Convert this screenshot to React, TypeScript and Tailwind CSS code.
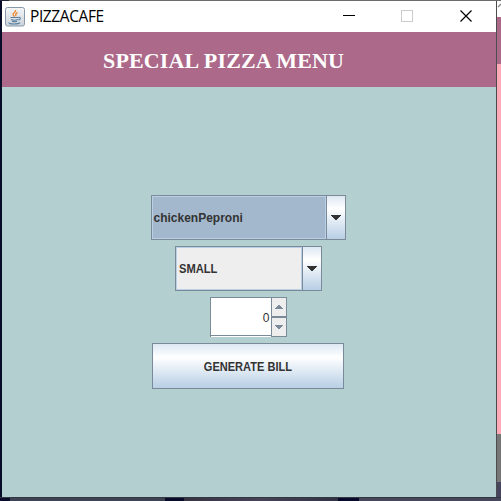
import React from "react";

function Combo({ label, className, fill, text }: { label: string; className: string; fill: string; text: string }) {
  return (
    <div className={`flex h-[45px] border border-[#7a8a99] ${className}`}>
      <div className={`flex flex-1 items-center border border-[#b8cfe5] ${fill}`}>
        <span className={`whitespace-nowrap text-[12px] font-bold leading-none text-[#333333] ${text}`}>{label}</span>
      </div>
      <div className="flex w-[19px] items-center justify-center border-l border-[#7a8a99] bg-[linear-gradient(#dde8f3_0%,#ffffff_30%,#b8cfe5_100%)]">
        <svg width="10" height="5" viewBox="0 0 10 5" shapeRendering="crispEdges">
          <path d="M0 0h10v1H9v1H8v1H7v1H6v1H4V4H3V3H2V2H1V1H0z" fill="#333333" />
        </svg>
      </div>
    </div>
  );
}

function TitleBar() {
  return (
    <header className="flex h-[31px] items-center bg-white pl-[3px]">
      <svg width="20" height="20" viewBox="0 0 20 20" className="shrink-0">
        <defs>
          <linearGradient id="tile" x1="0" y1="0" x2="0" y2="1">
            <stop offset="0" stopColor="#f5f6f7" />
            <stop offset="1" stopColor="#cbd2da" />
          </linearGradient>
        </defs>
        <rect x=".5" y=".5" width="19" height="18.500" rx="2" fill="url(#tile)" stroke="#8798aa" />
        <path d="M10.500 3c1 2-3.500 3.200-2.300 5.200.5.9 1.200 1 1 1.500M12.500 5.500c-3 1.400-1.500 2.300-1.700 3.700" fill="none" stroke="#ed8b35" strokeWidth="1.400" />
        <path d="M5.500 10.500h7.500M6 12.500c2 .8 5 .8 7 0M7 14.300c2 .7 3.500.7 5 0M13 10.500c3-1 3 2 .3 2.500M4 15.500c-1 2 9.500 2 11 .2" fill="none" stroke="#587f9f" strokeWidth="1.100" />
      </svg>
      <span className="ml-[5px] w-[80px] whitespace-nowrap font-['Open_Sans',sans-serif] text-[15.5px] leading-none tracking-[-0.4px] text-black">PIZZACAFE</span>
      <div className="mb-[1px] ml-auto mr-[24px] flex items-center">
        <svg width="12" height="12" shapeRendering="crispEdges"><path d="M0 5.500h12" stroke="#000" /></svg>
        <svg className="ml-[46px]" width="12" height="12" shapeRendering="crispEdges"><path d="M.5.5h11v11H.5z" fill="none" stroke="#cccccc" /></svg>
        <svg className="ml-[47px]" width="12" height="12"><path d="M.5.5l11 11M11.500.5l-11 11" stroke="#000" strokeWidth="1.200" /></svg>
      </div>
    </header>
  );
}

function Spinner() {
  return (
    <div className="mt-[6px] flex h-10 w-[77px]">
      <div className="flex flex-1 items-center justify-end border-l border-t border-[#7a8a99] bg-white pr-px shadow-[inset_0_-1px_#fff,inset_0_-2px_#7a8a99]">
        <span className="text-[12px] leading-none text-[#333333]">0</span>
      </div>
      <div className="w-4">
        <div className="flex h-5 items-center justify-center border border-[#7a8a99] bg-[#eeeeee]">
          <svg width="8" height="4" shapeRendering="crispEdges"><path d="M3 0h2v1h1v1h1v1h1v1H0V3h1V2h1V1h1z" fill="#7a8a99" /></svg>
        </div>
        <div className="flex h-5 items-center justify-center border border-[#7a8a99] bg-[#eeeeee]">
          <svg width="8" height="4" shapeRendering="crispEdges"><path d="M0 0h8v1H7v1H6v1H5v1H3V3H2V2H1V1H0z" fill="#7a8a99" /></svg>
        </div>
      </div>
    </div>
  );
}

export default function App() {
  return (
    <div className="flex h-[501px] w-[501px] flex-col overflow-hidden bg-[#080c28] font-['Liberation_Sans',Arial,sans-serif]">
      <div className="flex h-px"><div className="w-[9px] bg-[#20223a]" /><div className="flex-1 bg-[#6c6c6e]" /></div>
      <div className="flex h-[496px]">
        <div className="w-0.5 bg-[#080c28]" />
        <main className="flex w-[494px] flex-col bg-[#b4cfd0]">
          <TitleBar />
          <div className="flex h-[55px] items-center bg-[#ad6989] pl-[101px]">
            <h1 className="whitespace-nowrap pt-0.5 font-['Liberation_Serif',serif] text-[22px] font-bold leading-none tracking-[0.15px] text-white">SPECIAL PIZZA MENU</h1>
          </div>
          <div className="flex flex-col items-center pr-[2px] pt-[108px]">
            <Combo label="chickenPeproni" className="w-[195px]" fill="bg-[#a3b8cc] pl-px" text="tracking-normal" />
            <Combo label="SMALL" className="mt-[6px] w-[147px]" fill="bg-[#eeeeee] pl-0.5" text="origin-left scale-x-[0.93]" />
            <Spinner />
            <button className="mt-[6px] flex h-[46px] w-[192px] items-center justify-center border border-[#7a8a99] bg-[linear-gradient(#dde8f3_0%,#ffffff_30%,#b8cfe5_100%)] pt-0.5 text-[12px] font-bold leading-none text-[#333333]">
              <span className="scale-x-[0.92] whitespace-nowrap">GENERATE BILL</span>
            </button>
          </div>
        </main>
        <div className="w-px bg-[#4c4c50]" />
        <aside className="flex flex-1 flex-col">
          <div className="flex h-4 items-start bg-white"><svg width="4" height="8"><path d="M1 6l3-3" stroke="#888" strokeWidth="1.300" /></svg></div>
          <div className="h-[47px] bg-[#ad6989]" />
          <div className="h-[370px] bg-[#ffaab7]" />
          <div className="h-12 bg-[#777777]" />
          <div className="flex-1 bg-[#45465e]" />
        </aside>
      </div>
      <div className="h-px bg-[#343641]" />
      <div className="flex h-[3px]">
        <div className="w-[10px] bg-[#090c2a]" />
        <div className="w-[155px] bg-[#3d4353]" />
        <div className="w-[19px] bg-[#080b27]" />
        <div className="w-[154px] bg-[linear-gradient(90deg,#363442,#454356_50%,#303344)]" />
        <div className="w-[21px] bg-[#080a2b]" />
        <div className="flex-1 bg-[#454659]" />
      </div>
    </div>
  );
}
